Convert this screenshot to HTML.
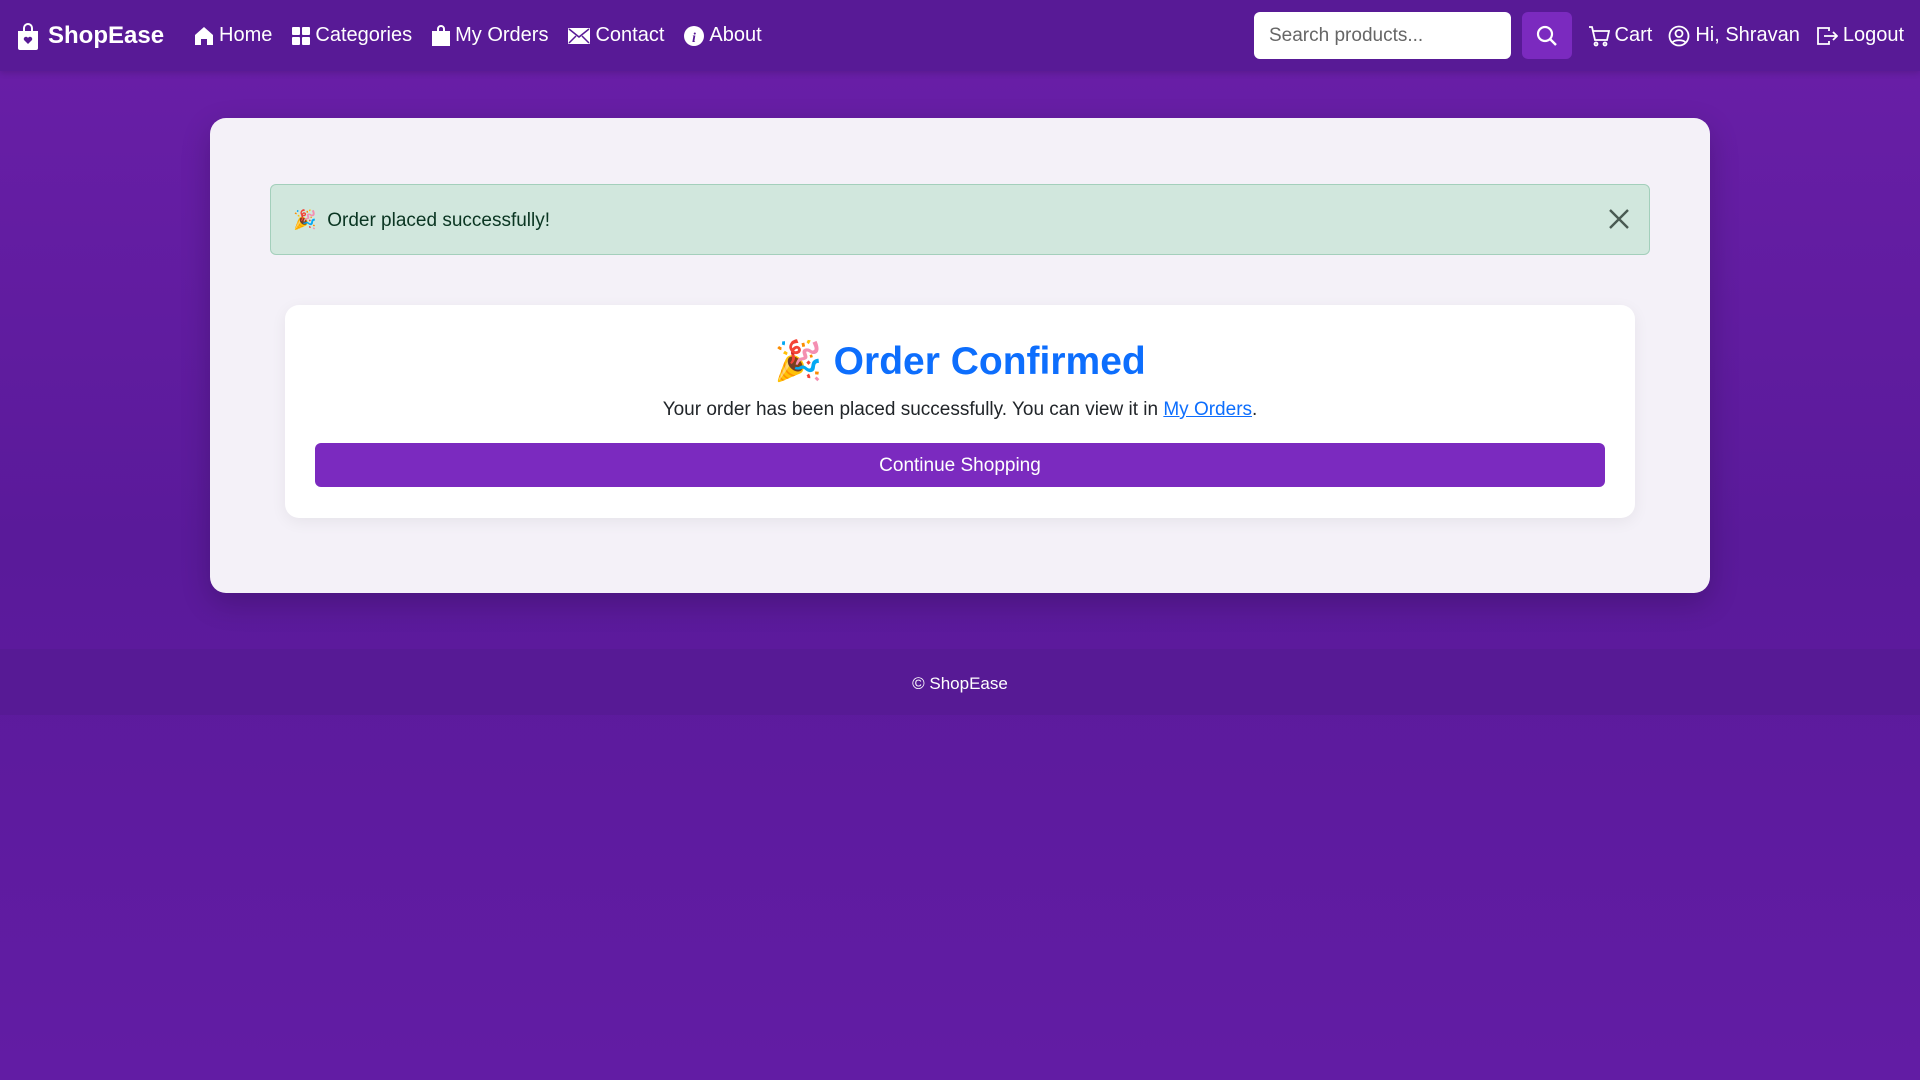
<!DOCTYPE html>
<html><head><meta charset="utf-8"><style>
*{box-sizing:border-box;margin:0;padding:0}
body{width:1920px;height:1080px;overflow:hidden;font-family:"Liberation Sans","Noto Sans CJK SC",sans-serif;background:linear-gradient(180deg,#6a1fa8 0%,#5a1a9a 50%,#621ca4 100%);color:#212529}
.nav{height:71px;background:#581a96;display:flex;align-items:center;padding:0 16px;color:#fff;font-size:20px;box-shadow:0 2px 6px rgba(0,0,0,.15);white-space:nowrap}
.brand{font-weight:bold;font-size:24px;display:flex;align-items:center;gap:8px;margin-right:30px}
.nl{display:flex;align-items:center;gap:5px;margin-right:20px}
.ic{fill:#fff}
.search{position:absolute;left:1254px;top:12px;width:257px;height:47px;background:#fff;border-radius:6px;color:#666;font-size:19px;padding:13px 15px}
.sbtn{position:absolute;left:1522px;top:12px;width:50px;height:47px;background:#7b2abf;border-radius:6px;display:flex;align-items:center;justify-content:center}
.right{position:absolute;right:16px;top:0;height:71px;display:flex;align-items:center;gap:16px;font-size:20px;color:#fff;white-space:nowrap}
.right span{display:flex;align-items:center;gap:5px}
.outer{position:absolute;left:210px;top:118px;width:1500px;height:475px;background:#f4f1f8;border-radius:16px;box-shadow:0 10px 30px rgba(0,0,0,.2)}
.alert{position:absolute;left:270px;top:184px;width:1380px;height:71px;background:#d1e7dd;border:1px solid #a3cfbb;border-radius:6px;display:flex;align-items:center;padding-left:22px;font-size:19px;color:#0a3622}
.x{position:absolute;right:18px;top:22px}
.card{position:absolute;left:285px;top:305px;width:1350px;height:213px;background:#fff;border-radius:14px;box-shadow:0 4px 16px rgba(0,0,0,.06);text-align:center}
h1{font-size:39px;color:#0d6efd;font-weight:bold;margin-top:34px;line-height:46px}
p{font-size:19px;margin-top:14px}
p a{color:#0d6efd}
.btn{position:absolute;left:30px;top:138px;width:1290px;height:44px;background:#7b2abf;color:#fff;border-radius:6px;font-size:19px;line-height:46px}
.foot{position:absolute;left:0;top:649px;width:1920px;height:66px;background:#571a95;color:#fff;font-size:17px;text-align:center;line-height:70px}
</style></head><body>
<div class="nav">
<div class="brand"><svg width="24" height="28" viewBox="0 0 24 28"><path class="ic" d="M7 9V6a5 5 0 0110 0v3h5v17a2 2 0 01-2 2H4a2 2 0 01-2-2V9zm2 0h6V6a3 3 0 00-6 0z"/><path d="M12 22l-4-4a2.2 2.2 0 014-2 2.2 2.2 0 014 2z" fill="#581a96"/></svg>ShopEase</div>
<div class="nl"><svg width="20" height="20" viewBox="0 0 20 20"><path class="ic" d="M10 1l9 8v10h-6v-6H7v6H1V9z"/></svg>Home</div>
<div class="nl"><svg width="18" height="18" viewBox="0 0 18 18"><rect class="ic" x="0" y="0" width="8" height="8" rx="1"/><rect class="ic" x="10" y="0" width="8" height="8" rx="1"/><rect class="ic" x="0" y="10" width="8" height="8" rx="1"/><rect class="ic" x="10" y="10" width="8" height="8" rx="1"/></svg>Categories</div>
<div class="nl"><svg width="18" height="22" viewBox="0 0 18 22"><path class="ic" d="M5 6V4a4 4 0 018 0v2h5v15H0V6zm2 0h4V4a2 2 0 00-4 0z"/></svg>My Orders</div>
<div class="nl"><svg width="22" height="16" viewBox="0 0 22 16"><rect class="ic" width="22" height="16" rx="1"/><path d="M1 1l10 8 10-8M1 15l7-7M21 15l-7-7" stroke="#581a96" stroke-width="1.5" fill="none"/></svg>Contact</div>
<div class="nl"><svg width="20" height="20" viewBox="0 0 20 20"><circle class="ic" cx="10" cy="10" r="10"/><text x="8" y="16" font-size="14" font-style="italic" font-weight="bold" fill="#581a96" font-family="Liberation Serif">i</text></svg>About</div>
</div>
<div class="search">Search products...</div>
<div class="sbtn"><svg width="22" height="22" viewBox="0 0 22 22"><circle cx="9" cy="9" r="7" stroke="#fff" stroke-width="2.2" fill="none"/><path d="M14 14l6 6" stroke="#fff" stroke-width="2.4"/></svg></div>
<div class="right">
<span><svg width="22" height="22" viewBox="0 0 22 22" fill="none" stroke="#fff" stroke-width="1.8"><path d="M1 2h3l3 13h12l2-9H5"/><circle cx="8" cy="19" r="1.5"/><circle cx="17" cy="19" r="1.5"/></svg>Cart</span>
<span><svg width="22" height="22" viewBox="0 0 22 22" fill="none" stroke="#fff" stroke-width="1.8"><circle cx="11" cy="11" r="9.5"/><circle cx="11" cy="8.5" r="3.5"/><path d="M4.5 17.5c2-3 11-3 13 0"/></svg>Hi, Shravan</span>
<span><svg width="22" height="20" viewBox="0 0 22 20" fill="none" stroke="#fff" stroke-width="1.8"><path d="M13 5V2H2v16h11v-3M8 10h13M17 6l4 4-4 4"/></svg>Logout</span>
</div>
<div class="outer"></div>
<div class="alert">🎉&nbsp; Order placed successfully!<svg class="x" width="24" height="24" viewBox="0 0 24 24"><path d="M3 3l18 18M21 3L3 21" stroke="#4a5a52" stroke-width="2.4"/></svg></div>
<div class="card"><h1>🎉 Order Confirmed</h1><p>Your order has been placed successfully. You can view it in <a href="#">My Orders</a>.</p><div class="btn">Continue Shopping</div></div>
<div class="foot">© ShopEase</div>
</body></html>
